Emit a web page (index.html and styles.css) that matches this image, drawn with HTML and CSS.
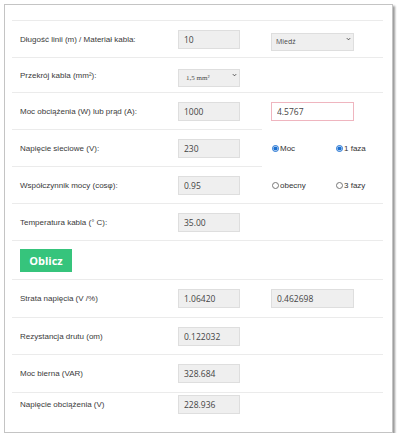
FILE: index.html
```html
<!DOCTYPE html>
<html lang="pl">
<head>
<meta charset="utf-8">
<title>Kalkulator spadku napięcia</title>
<link rel="stylesheet" href="styles.css">
</head>
<body>
<div class="card">
  <div class="calc">
    <div class="cell label">Długość linii (m) / Materiał kabla:</div>
    <div class="cell"><input class="field" value="10"></div>
    <div class="cell col3 span2">
      <span class="select wide">
        <select><option>Miedź</option><option>Aluminium</option></select>
        <svg class="chev" viewBox="0 0 6 4"><path d="M1 1 L3 3 L5 1" fill="none" stroke="#444" stroke-width="1.1"/></svg>
      </span>
    </div>

    <div class="cell label">Przekrój kabla (mm²):</div>
    <div class="cell">
      <span class="select">
        <select class="serif"><option>1,5 mm²</option><option>2,5 mm²</option></select>
        <svg class="chev" viewBox="0 0 6 4"><path d="M1 1 L3 3 L5 1" fill="none" stroke="#444" stroke-width="1.1"/></svg>
      </span>
    </div>
    <div class="cell span2"></div>

    <div class="cell label">Moc obciążenia (W) lub prąd (A):</div>
    <div class="cell"><input class="field" value="1000"></div>
    <div class="cell col3 span2"><input class="field wide alert" value="4.5767"></div>

    <div class="cell label">Napięcie sieciowe (V):</div>
    <div class="cell"><input class="field" value="230"></div>
    <div class="cell col3 nb"><label class="radio"><input type="radio" name="mode" checked>Moc</label></div>
    <div class="cell col4 nb"><label class="radio"><input type="radio" name="phase" checked>1 faza</label></div>

    <div class="cell label">Współczynnik mocy (cosφ):</div>
    <div class="cell"><input class="field" value="0.95"></div>
    <div class="cell col3 nb"><label class="radio"><input type="radio" name="mode">obecny</label></div>
    <div class="cell col4 nb"><label class="radio"><input type="radio" name="phase">3 fazy</label></div>

    <div class="cell label">Temperatura kabla (° C):</div>
    <div class="cell"><input class="field" value="35.00"></div>
    <div class="cell span2"></div>

    <div class="cell span4"><button class="btn" type="button">Oblicz</button></div>

    <div class="cell label">Strata napięcia (V /%)</div>
    <div class="cell"><input class="field" value="1.06420" readonly></div>
    <div class="cell col3 span2"><input class="field wide" value="0.462698" readonly></div>

    <div class="cell label">Rezystancja drutu (om)</div>
    <div class="cell"><input class="field" value="0.122032" readonly></div>
    <div class="cell span2"></div>

    <div class="cell label">Moc bierna (VAR)</div>
    <div class="cell"><input class="field" value="328.684" readonly></div>
    <div class="cell span2"></div>

    <div class="cell label">Napięcie obciążenia (V)</div>
    <div class="cell"><input class="field" value="228.936" readonly></div>
    <div class="cell span2"></div>
  </div>
</div>
</body>
</html>
```

FILE: styles.css
```css
body {
  margin: 0;
  background: #ffffff;
  font-family: "Liberation Sans", Arial, sans-serif;
}

.card {
  margin: 4px 0 0 4px;
  width: 389px;
  height: 429px;
  box-sizing: border-box;
  border: 1px solid #c4c4c4;
  box-shadow: 2px 2px 2px #9a9a9a;
  background: #ffffff;
  padding: 15px 0 0 7px;
}

.calc {
  display: grid;
  grid-template-columns: 158px 92px 64px 57px;
  grid-template-rows: 37px 35px 37px 37px 37px 37px 39px 38px 37px 38px 23px;
}

.cell {
  box-sizing: border-box;
  border-top: 1px solid #ebebeb;
  display: flex;
  align-items: center;
  padding-left: 8px;
  min-width: 0;
}

.cell.nb {
  border-top-color: transparent;
}

.col3 {
  padding-left: 9px;
}

.col4 {
  padding-left: 9px;
}

.span2 {
  grid-column: span 2;
}

.span4 {
  grid-column: span 4;
}

.label {
  font-size: 8px;
  color: #3a3a3a;
  white-space: nowrap;
}

.field {
  box-sizing: border-box;
  width: 62px;
  height: 19px;
  margin: 0;
  padding: 0 5px;
  border: 1px solid #dedede;
  border-radius: 0;
  background: #efefef;
  font-family: "Open Sans", sans-serif;
  font-size: 8.5px;
  color: #444444;
  outline: none;
}

.field.wide {
  width: 83px;
}

.field.alert {
  background: #ffffff;
  border-color: #efb5bf;
}

.select {
  position: relative;
  display: block;
  width: 62px;
  height: 18px;
}

.select.wide {
  width: 83px;
}

.select select {
  appearance: none;
  -webkit-appearance: none;
  box-sizing: border-box;
  width: 100%;
  height: 100%;
  margin: 0;
  padding: 0 4px;
  border: 1px solid #dedede;
  border-radius: 0;
  background: #efefef;
  font-family: "Open Sans", sans-serif;
  font-size: 7px;
  color: #4a4a4a;
  outline: none;
}

.select select.serif {
  font-family: "Liberation Serif", serif;
  font-size: 7px;
  padding-left: 7px;
}

.chev {
  position: absolute;
  right: 3px;
  top: 7px;
  width: 5px;
  height: 4px;
}

.radio {
  display: flex;
  align-items: center;
  font-size: 8px;
  color: #333333;
  white-space: nowrap;
}

.radio input {
  width: 7px;
  height: 7px;
  margin: 0 1px 0 1px;
  accent-color: #1a6fd1;
}

.btn {
  width: 52px;
  height: 23px;
  padding: 0;
  border: 0;
  border-radius: 0;
  background: #36c47c;
  color: #ffffff;
  font-family: "Open Sans", sans-serif;
  font-weight: bold;
  font-size: 11px;
}
```
